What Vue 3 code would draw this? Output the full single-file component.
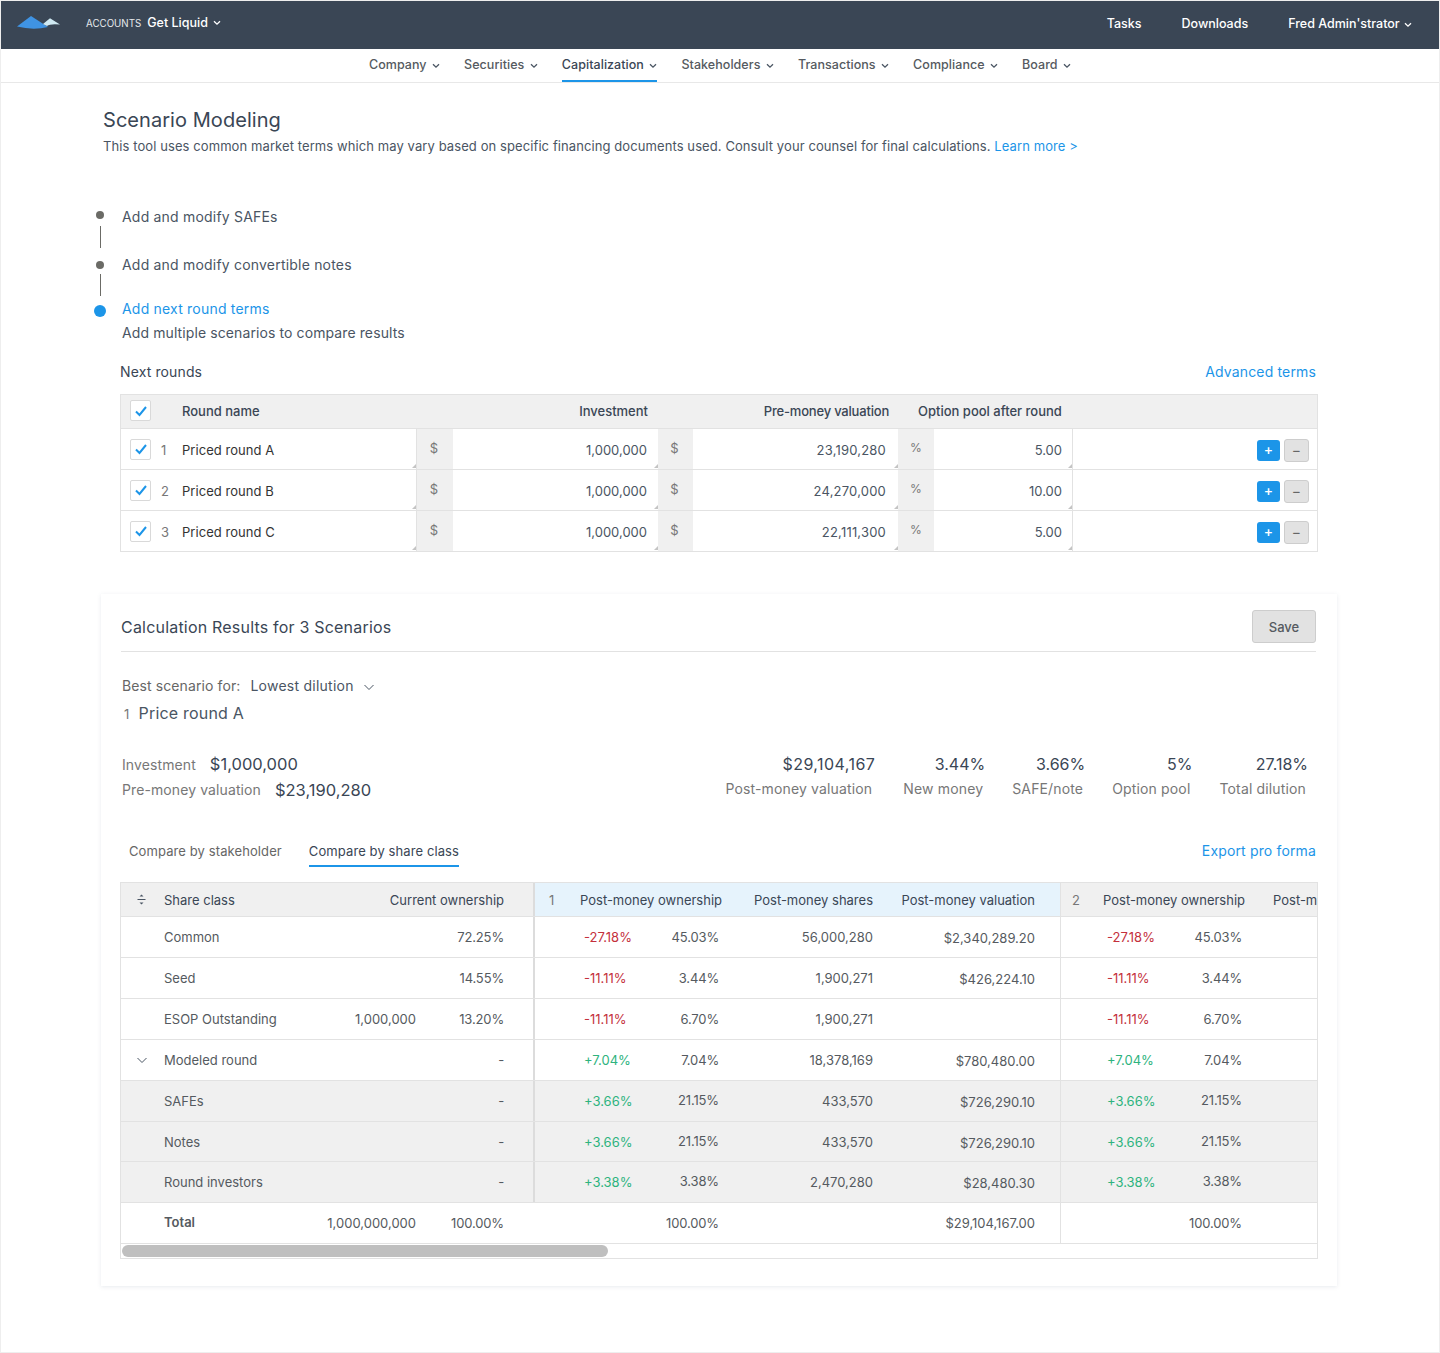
<script setup>
const navItems = ['Company', 'Securities', 'Capitalization', 'Stakeholders', 'Transactions', 'Compliance', 'Board']
const rounds = [
  { n: 1, name: 'Priced round A', inv: '1,000,000', pre: '23,190,280', pool: '5.00' },
  { n: 2, name: 'Priced round B', inv: '1,000,000', pre: '24,270,000', pool: '10.00' },
  { n: 3, name: 'Priced round C', inv: '1,000,000', pre: '22,111,300', pool: '5.00' },
]
const stats = [
  { v: '$29,104,167', l: 'Post-money valuation' },
  { v: '3.44%', l: 'New money' },
  { v: '3.66%', l: 'SAFE/note' },
  { v: '5%', l: 'Option pool' },
  { v: '27.18%', l: 'Total dilution' },
]
const rows = [
  { name: 'Common', own: '72.25%', d: '-27.18%', p: '45.03%', s: '56,000,280', v: '$2,340,289.20' },
  { name: 'Seed', own: '14.55%', d: '-11.11%', p: '3.44%', s: '1,900,271', v: '$426,224.10' },
  { name: 'ESOP Outstanding', sh: '1,000,000', own: '13.20%', d: '-11.11%', p: '6.70%', s: '1,900,271', v: '' },
  { name: 'Modeled round', own: '-', d: '+7.04%', p: '7.04%', s: '18,378,169', v: '$780,480.00', open: true },
  { name: 'SAFEs', own: '-', d: '+3.66%', p: '21.15%', s: '433,570', v: '$726,290.10', sub: true },
  { name: 'Notes', own: '-', d: '+3.66%', p: '21.15%', s: '433,570', v: '$726,290.10', sub: true, short: true },
  { name: 'Round investors', own: '-', d: '+3.38%', p: '3.38%', s: '2,470,280', v: '$28,480.30', sub: true },
]
const isUp = (d) => d.startsWith('+')
</script>

<template>
  <div class="page">
    <header class="topbar">
      <svg class="logo" width="44" height="16" viewBox="0 0 44 16">
        <path d="M0 11.5 L14 1 L31 12 Q16 15.5 0 11.5Z" fill="#3f93e3" />
        <path d="M26 9 L33 3.2 L43 9.5 Q33 8.5 30 11Z" fill="#cfe9f2" />
      </svg>
      <span class="accounts">ACCOUNTS</span>
      <span class="company">Get Liquid</span>
      <svg class="chev light" width="8" height="6" viewBox="0 0 8 6"><path d="M1 1.2 L4 4.2 L7 1.2" /></svg>
      <nav class="topright">
        <span>Tasks</span>
        <span>Downloads</span>
        <span class="user">Fred Admin'strator
          <svg class="chev light" width="8" height="6" viewBox="0 0 8 6"><path d="M1 1.2 L4 4.2 L7 1.2" /></svg>
        </span>
      </nav>
    </header>

    <nav class="subnav">
      <a v-for="item in navItems" :key="item" class="navitem" :class="{ active: item === 'Capitalization' }">
        {{ item }}
        <svg class="chev" width="8" height="6" viewBox="0 0 8 6"><path d="M1 1.2 L4 4.2 L7 1.2" /></svg>
      </a>
    </nav>

    <main class="main">
      <h1 class="title">Scenario Modeling</h1>
      <p class="intro">This tool uses common market terms which may vary based on specific financing documents used. Consult your counsel for final calculations. <a class="link">Learn more &gt;</a></p>

      <ol class="steps">
        <li class="step s1">
          <div class="rail"><i class="dot"></i><i class="line"></i></div>
          <div class="steptext">Add and modify SAFEs</div>
        </li>
        <li class="step s2">
          <div class="rail"><i class="dot"></i><i class="line"></i></div>
          <div class="steptext">Add and modify convertible notes</div>
        </li>
        <li class="step s3">
          <div class="rail"><i class="dot big"></i></div>
          <div>
            <div class="steptext cur">Add next round terms</div>
            <div class="steptext tight">Add multiple scenarios to compare results</div>
          </div>
        </li>
      </ol>

      <div class="roundshead">
        <span>Next rounds</span>
        <a class="link big">Advanced terms</a>
      </div>

      <section class="rtable">
        <div class="rrow rhead">
          <div class="rnamecell">
            <span class="check"><svg width="14" height="12" viewBox="0 0 14 12"><path d="M2 6.5 L5.5 10 L12 2" /></svg></span>
            <span class="headname">Round name</span>
          </div>
          <div class="hright hinv">Investment</div>
          <div class="hright hpre">Pre-money valuation</div>
          <div class="hpool">Option pool after round</div>
          <div></div>
        </div>
        <div v-for="r in rounds" :key="r.n" class="rrow">
          <div class="rnamecell field">
            <span class="check"><svg width="14" height="12" viewBox="0 0 14 12"><path d="M2 6.5 L5.5 10 L12 2" /></svg></span>
            <span class="rnum">{{ r.n }}</span>
            <span class="rname">{{ r.name }}</span>
          </div>
          <div class="addon">$</div>
          <div class="input field inv">{{ r.inv }}</div>
          <div class="addon">$</div>
          <div class="input field pre">{{ r.pre }}</div>
          <div class="addon pct">%</div>
          <div class="input field last">{{ r.pool }}</div>
          <div class="actions">
            <button class="add">+</button>
            <button class="remove">−</button>
          </div>
        </div>
      </section>

      <section class="card">
        <div class="cardhead">
          <h2>Calculation Results for 3 Scenarios</h2>
          <button class="save">Save</button>
        </div>

        <div class="best">
          <span class="bestlabel">Best scenario for:</span>
          <span class="bestval">Lowest dilution</span>
          <svg class="chev wide" width="12" height="7" viewBox="0 0 12 7"><path d="M1.5 1 L6 5.5 L10.5 1" /></svg>
        </div>
        <div class="bestname"><span class="bestnum">1</span>Price round A</div>

        <div class="summary">
          <div class="sumleft">
            <div class="sumline"><span>Investment</span><b>$1,000,000</b></div>
            <div class="sumline second"><span>Pre-money valuation</span><b>$23,190,280</b></div>
          </div>
          <div class="stats">
            <div v-for="s in stats" :key="s.l" class="stat">
              <b>{{ s.v }}</b>
              <span>{{ s.l }}</span>
            </div>
          </div>
        </div>

        <div class="tabs">
          <a class="tab">Compare by stakeholder</a>
          <a class="tab on">Compare by share class</a>
          <a class="link big export">Export pro forma</a>
        </div>

        <div class="ctable">
          <div class="cscroll">
            <div class="chead">
              <div class="hfix">
                <div class="hicon">
                  <svg width="9" height="11" viewBox="0 0 9 11"><path d="M2.5 2.6 L4.5 0.6 L6.5 2.6Z M2.5 8.4 L4.5 10.4 L6.5 8.4Z" fill="#4a5563" /><path d="M0.5 5.5 H8.5" stroke="#4a5563" /></svg>
                </div>
                <div>Share class</div>
                <div class="ar">Current ownership</div>
                <div class="hdiv"></div>
              </div>
              <div class="hg blue">
                <div class="hnum">1</div>
                <div>Post-money ownership</div>
                <div class="ar">Post-money shares</div>
                <div class="ar">Post-money valuation</div>
              </div>
              <div class="hg two">
                <div class="hnum n2">2</div>
                <div>Post-money ownership</div>
                <div></div>
                <div class="peek">Post-m</div>
              </div>
            </div>

            <div v-for="row in rows" :key="row.name" class="crow" :class="{ sub: row.sub, short: row.short }">
              <div class="cicon">
                <svg v-if="row.open" class="chev wide" width="12" height="7" viewBox="0 0 12 7"><path d="M1.5 1 L6 5.5 L10.5 1" /></svg>
              </div>
              <div>{{ row.name }}</div>
              <div class="ar">{{ row.sh }}</div>
              <div class="ar pc">{{ row.own }}</div>
              <div class="fixend"></div>
              <div></div>
              <div :class="isUp(row.d) ? 'up' : 'down'">{{ row.d }}</div>
              <div class="ar pc" :class="{ raise: row.sub }">{{ row.p }}</div>
              <div class="ar">{{ row.s }}</div>
              <div class="ar low">{{ row.v }}</div>
              <div class="groupend"></div>
              <div></div>
              <div :class="isUp(row.d) ? 'up' : 'down'">{{ row.d }}</div>
              <div class="ar pc" :class="{ raise: row.sub }">{{ row.p }}</div>
              <div></div>
            </div>

            <div class="crow total">
              <div></div>
              <div class="totalname">Total</div>
              <div class="ar">1,000,000,000</div>
              <div class="ar pc">100.00%</div>
              <div></div>
              <div></div>
              <div></div>
              <div class="ar pc">100.00%</div>
              <div></div>
              <div class="ar">$29,104,167.00</div>
              <div class="groupend"></div>
              <div></div>
              <div></div>
              <div class="ar pc">100.00%</div>
              <div></div>
            </div>
          </div>
          <div class="scrollbar"><div class="thumb"></div></div>
        </div>
      </section>
    </main>
  </div>
</template>

<style>
html, body { margin: 0; background: #fff; }
</style>

<style scoped>
.page {
  width: 1440px;
  height: 1353px;
  box-sizing: border-box;
  border: 1px solid #eeeeee;
  overflow: hidden;
  font-family: Inter, "Liberation Sans", sans-serif;
  font-size: 13px;
  color: #555a60;
  background: #fff;
}
h1, h2, p, ol { margin: 0; padding: 0; }
.chev path { fill: none; stroke: #4a5563; stroke-width: 1.3; }
.chev.light path { stroke: #fff; }
.chev.wide path { stroke-width: 1; }

.topbar {
  height: 48px;
  background: #3a4655;
  color: #fff;
  display: flex;
  align-items: center;
  padding: 0 27px 4px 16px;
  box-sizing: border-box;
  font-size: 12.5px;
}
.logo { margin-right: 25px; margin-top: 0; }
.accounts { font-size: 9.75px; margin-right: 6px; color: #e6e9ec; }
.company { font-weight: 500; margin-right: 5px; margin-top: -1px; }
.topright { margin-left: auto; display: flex; gap: 40px; font-weight: 500; }
.user .chev { margin-left: 1px; }

.subnav {
  height: 34px;
  box-sizing: border-box;
  border-bottom: 1px solid #e8e8e8;
  display: flex;
  justify-content: center;
  gap: 24.1px;
  font-size: 12.5px;
  letter-spacing: 0.05px;
}
.navitem {
  height: 33px;
  box-sizing: border-box;
  padding-top: 7px;
  line-height: 17px;
  font-weight: 500;
  color: #555a60;
  display: block;
  white-space: nowrap;
}
.navitem .chev { margin-left: 2px; }
.navitem.active { color: #3a4655; border-bottom: 2px solid #1c95e8; }

.main { padding: 23px 0 0 102px; width: 1216px; }
.title { font-size: 20px; line-height: 28px; font-weight: 400; color: #3a4655; letter-spacing: 0.05px; }
.intro { line-height: 24px; color: #4a5563; letter-spacing: 0.09px; white-space: nowrap; }
.link { color: #1c95e8; }
.link.big { font-size: 14px; letter-spacing: 0.15px; }

.steps { list-style: none; margin: 47px 0 0 -9px; }
.step { display: flex; gap: 16px; }
.step.s1 { height: 48px; }
.step.s2 { height: 44px; }
.rail { width: 12px; display: flex; flex-direction: column; align-items: center; }
.dot { width: 8px; height: 8px; border-radius: 50%; background: #6b6b66; display: block; margin-top: 6px; }
.s2 .dot { margin-top: 8px; }
.dot.big { width: 12px; height: 12px; background: #1c95e8; margin-top: 8px; }
.line { width: 1px; height: 22px; background: #6b6b66; display: block; margin-top: 7px; }
.s2 .line { margin-top: 5px; }
.steptext { font-size: 14px; line-height: 24px; color: #4a5563; letter-spacing: 0.2px; white-space: nowrap; }
.steptext.cur { color: #1c95e8; }
.steptext.tight { letter-spacing: 0.1px; }

.roundshead {
  margin: 15px 0 0 17px;
  width: 1196px;
  display: flex;
  justify-content: space-between;
  line-height: 24px;
  font-size: 14px;
  color: #3a4655;
  letter-spacing: 0.12px;
}

.rtable {
  margin: 10px 0 0 17px;
  width: 1198px;
  box-sizing: border-box;
  border: 1px solid #e2e2e2;
  border-bottom: 0;
}
.rrow {
  display: grid;
  grid-template-columns: 296px 36px 205px 35px 205px 36px 139px 1fr;
  height: 41px;
  box-sizing: border-box;
  border-bottom: 1px solid #e2e2e2;
}
.rhead {
  height: 34px;
  padding-bottom: 2px;
  background: #f0f0f0;
  grid-template-columns: 296px 241px 240px 175px 1fr;
  font-weight: 500;
  color: #3a4655;
  align-items: center;
}
.rnamecell { display: flex; align-items: center; padding-left: 9px; height: 100%; box-sizing: border-box; }
.rnamecell.field { border-right: 1px solid #e2e2e2; }
.check {
  width: 21px;
  height: 21px;
  box-sizing: border-box;
  border: 1px solid #d9d9d9;
  border-radius: 2px;
  background: #fff;
  display: flex;
  align-items: center;
  justify-content: center;
  flex: none;
}
.check path { fill: none; stroke: #1c95e8; stroke-width: 2; }
.headname { margin-left: 31px; }
.rnum { width: 10px; margin-left: 10px; margin-top: 2px; color: #777; }
.rname { margin-left: 11px; margin-top: 2px; color: #333; letter-spacing: 0.05px; }
.hright { text-align: right; }
.hinv { padding-right: 10px; }
.hpre { padding-right: 9px; letter-spacing: -0.2px; }
.hpool { padding-left: 20px; white-space: nowrap; }
.addon {
  background: #f0f0f0;
  color: #777;
  display: flex;
  align-items: center;
  justify-content: center;
  padding: 0 2px 3px 0;
  box-sizing: border-box;
}
.addon.pct { font-size: 12px; padding-right: 0; }
.input {
  display: flex;
  align-items: center;
  justify-content: flex-end;
  padding: 2px 10px 0 0;
  box-sizing: border-box;
  color: #4a5563;
}
.input.inv { padding-right: 11px; }
.input.pre { padding-right: 12px; letter-spacing: 0.2px; }
.input.last { border-right: 1px solid #e2e2e2; }
.field { position: relative; }
.field::after {
  content: "";
  position: absolute;
  right: 0;
  bottom: 1px;
  width: 0;
  height: 0;
  border-left: 4px solid transparent;
  border-bottom: 4px solid #c4c4c4;
}
.actions {
  display: flex;
  align-items: center;
  justify-content: flex-end;
  gap: 4px;
  padding: 2px 8px 0 0;
}
.actions button {
  padding: 0;
  font-family: inherit;
  font-size: 14px;
  line-height: 1;
  border-radius: 3px;
  display: flex;
  align-items: center;
  justify-content: center;
}
.add { width: 23px; height: 21px; background: #1c95e8; color: #fff; border: 0; font-weight: 500; }
.remove { width: 25px; height: 23px; background: #e2e2e2; color: #666; border: 1px solid #cdcdcd; }

.card {
  margin: 42px 0 0 -2px;
  width: 1236px;
  height: 692px;
  box-sizing: border-box;
  padding: 16px 20px 0 20px;
  background: #fff;
  box-shadow: 0 1px 4px rgba(90, 110, 140, 0.14);
}
.cardhead {
  display: flex;
  justify-content: space-between;
  align-items: flex-start;
  height: 41px;
  border-bottom: 1px solid #e2e2e2;
  width: 1195px;
  box-sizing: content-box;
}
.cardhead h2 { font-size: 16px; font-weight: 400; color: #3a4655; line-height: 34px; letter-spacing: 0.2px; }
.save {
  width: 64px;
  height: 33px;
  padding: 0;
  background: #e2e2e2;
  border: 1px solid #cdcdcd;
  border-radius: 3px;
  font-family: inherit;
  font-size: 13px;
  font-weight: 500;
  color: #555a60;
}
.best {
  margin: 22px 0 0 1px;
  display: flex;
  align-items: center;
  line-height: 24px;
  font-size: 14px;
  letter-spacing: 0.1px;
}
.bestlabel { color: #666; }
.bestval { color: #4a5563; margin-left: 10px; letter-spacing: 0.25px; }
.best .chev { margin-left: 9px; margin-top: 2px; }
.bestname { margin: 3px 0 0 3px; font-size: 16px; line-height: 24px; color: #4a5563; letter-spacing: 0.2px; }
.bestnum { font-size: 13px; color: #777; margin-right: 9px; }

.summary { margin: 25px 0 0 1px; display: flex; justify-content: space-between; width: 1184px; }
.sumline { display: flex; align-items: center; height: 26px; font-size: 14px; letter-spacing: 0.1px; color: #777; }
.sumline.second { height: 25px; }
.sumline b { font-size: 16.5px; font-weight: 400; color: #3a4655; margin-left: 14px; letter-spacing: 0; }
.stats { display: flex; gap: 29px; margin-top: 1px; }
.stat { display: flex; flex-direction: column; align-items: flex-end; }
.stat:first-child { margin-right: 2px; }
.stat b { font-weight: 400; font-size: 16px; line-height: 24px; color: #3a4655; margin-right: -2px; }
.stat:first-child b { letter-spacing: 0.45px; margin-right: -3px; }
.stat span { font-size: 14px; line-height: 26px; letter-spacing: 0.15px; color: #777; white-space: nowrap; }

.tabs { margin: 39px 0 0 0; padding-right: 1px; display: flex; height: 29px; align-items: flex-start; }
.tab { padding: 0 0 3px; margin-left: 8px; line-height: 21px; letter-spacing: 0.1px; color: #666; margin-right: 19px; }
.tab.on { color: #3a4655; border-bottom: 2px solid #1c95e8; }
.export { margin-left: auto; line-height: 19px; }

.ctable {
  margin-top: 12px;
  width: 1198px;
  margin-left: -1px;
  box-sizing: border-box;
  border: 1px solid #e2e2e2;
}
.cscroll { overflow: hidden; }
.chead { display: flex; height: 34px; border-bottom: 1px solid #e2e2e2; box-sizing: border-box; color: #3a4655; white-space: nowrap; }
.chead > div { height: 33px; align-items: center; flex: none; display: grid; }
.hfix { width: 414px; grid-template-columns: 43px 130px 210px 31px; background: #f0f0f0; }
.hdiv { height: 33px; border-right: 2px solid #dcdcdc; }
.hicon { display: flex; justify-content: center; padding-right: 2px; }
.hg.blue { width: 526px; grid-template-columns: 45px 141px 152px 162px 26px; background: #e6f3fc; border-right: 1px solid #e2e2e2; box-sizing: border-box; }
.hg.two { width: 256px; grid-template-columns: 42px 141px 29px 44px; background: #f0f0f0; }
.hnum { padding-left: 14px; color: #777; }
.hnum.n2 { padding-left: 11px; }
.peek { overflow: hidden; }
.ar { text-align: right; white-space: nowrap; }
.pc { letter-spacing: -0.15px; }

.crow {
  display: grid;
  grid-template-columns: 43px 130px 122px 88px 31px 49px 60px 75px 154px 162px 26px 46px 60px 75px 75px;
  height: 41px;
  box-sizing: border-box;
  border-bottom: 1px solid #e2e2e2;
  align-items: center;
  white-space: nowrap;
}
.crow.sub { background: #f0f0f0; }
.crow.short { height: 40px; }
.crow > .fixend { height: 100%; box-sizing: border-box; border-right: 2px solid #dcdcdc; }
.crow > .groupend { height: 100%; box-sizing: border-box; border-right: 1px solid #e2e2e2; }
.cicon { display: flex; justify-content: center; padding-right: 2px; }
.up { color: #2eb37e; }
.down { color: #c4303c; }
.raise { padding-bottom: 2px; }
.low { padding-top: 2px; }
.totalname { font-weight: 600; padding-bottom: 2px; }
.scrollbar { height: 14px; box-sizing: border-box; padding: 1px; }
.thumb { width: 486px; height: 12px; border-radius: 6px; background: #bfbfbf; }
</style>
